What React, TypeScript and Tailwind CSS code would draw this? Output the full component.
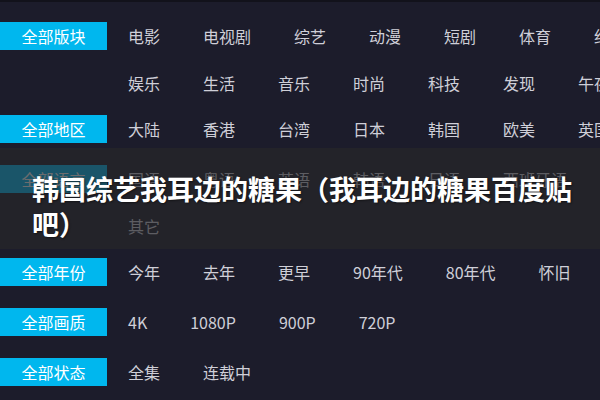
import React from "react";

type Group = { label: string; items: string[] };

const groups: Group[] = [
  {
    label: "全部版块",
    items: ["电影", "电视剧", "综艺", "动漫", "短剧", "体育", "纪录片", "娱乐", "生活", "音乐", "时尚", "科技", "发现", "午夜"],
  },
  { label: "全部地区", items: ["大陆", "香港", "台湾", "日本", "韩国", "欧美", "英国"] },
  { label: "全部语言", items: ["国语", "粤语", "英语", "韩语", "日语", "西班牙语", "法语", "其它"] },
  { label: "全部年份", items: ["今年", "去年", "更早", "90年代", "80年代", "怀旧"] },
  { label: "全部画质", items: ["4K", "1080P", "900P", "720P"] },
  { label: "全部状态", items: ["全集", "连载中"] },
];

export default function App() {
  return (
    <div
      className="relative w-[600px] h-[400px] overflow-hidden bg-[#1c1c2b] border-t-2 border-[#12121b]"
      style={{ fontFamily: '"Noto Sans CJK SC", "Noto Sans", sans-serif' }}
    >
      <div className="pt-[20px] flex flex-col">
        {groups.map((g) => (
          <div key={g.label} className="flex items-start">
            <div className="w-[107px] h-[28px] mb-[22px] shrink-0 bg-[#00b7ee] text-white text-[16px] leading-[28px] text-center">
              {g.label}
            </div>
            <div className="ml-[21px] w-[560px] shrink-0 flex flex-wrap">
              {g.items.map((it) => (
                <span
                  key={it}
                  className="h-[28px] leading-[28px] mb-[18.5px] mr-[43px] text-[16px] text-[#cfcfd8] whitespace-nowrap"
                >
                  {it}
                </span>
              ))}
            </div>
          </div>
        ))}
      </div>

      <div className="absolute left-0 right-0 top-[146px] h-[101px] bg-[rgba(38,38,41,0.68)] pt-[23px] pl-[32px] pr-[20px]">
        <h1 className="text-white font-bold text-[27px] leading-[35px] [text-shadow:1px_1px_2px_rgba(0,0,0,0.45)]">
          韩国综艺我耳边的糖果（我耳边的糖果百度贴吧）
        </h1>
      </div>
    </div>
  );
}
